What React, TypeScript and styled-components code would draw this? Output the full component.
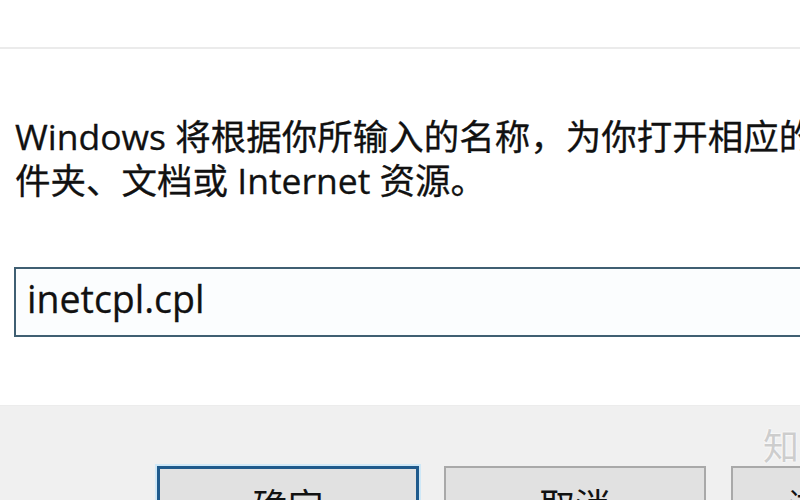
import styled, { createGlobalStyle } from "styled-components"

const GlobalStyle = createGlobalStyle`
  html, body {
    margin: 0;
    padding: 0;
    background: #ffffff;
  }
  body {
    width: 800px;
    height: 500px;
    overflow: hidden;
    font-family: "Open Sans", "Noto Sans CJK SC", sans-serif;
  }
`

const RunDialog = () => {
  return (
    <Window>
      <GlobalStyle />
      <Body>
        <TitleRule />
        <Prompt>
          <PromptLine>Windows 将根据你所输入的名称，为你打开相应的程序、文</PromptLine>
          <PromptLine>件夹、文档或 Internet 资源。</PromptLine>
        </Prompt>
        <CommandInput readOnly value="inetcpl.cpl" />
      </Body>
      <Footer>
        <DialogButton $primary>确定</DialogButton>
        <DialogButton>取消</DialogButton>
        <DialogButton>浏览(B)...</DialogButton>
        <Watermark>知乎</Watermark>
      </Footer>
    </Window>
  )
}

export default RunDialog

const Window = styled.div`
  width: 800px;
  height: 500px;
  display: flex;
  flex-direction: column;
  overflow: hidden;
  background: #ffffff;
`
const Body = styled.div`
  display: flex;
  flex-direction: column;
  height: 405px;
  flex-shrink: 0;
  background: #ffffff;
`
const TitleRule = styled.div`
  height: 47px;
  border-bottom: 2px solid #ebebeb;
`
const Prompt = styled.div`
  margin-top: 65px;
  padding-left: 15px;
  color: #111111;
  font-size: 35.5px;
  -webkit-text-stroke: 0.3px #111111;
`
const PromptLine = styled.div`
  white-space: nowrap;
  line-height: 44px;
`
const CommandInput = styled.input`
  margin: 65px 0 0 14px;
  width: 830px;
  height: 70px;
  box-sizing: border-box;
  border: 2px solid #3f5f72;
  background: #fbfdfe;
  padding: 0 0 8px 11px;
  font-family: "Open Sans", "Noto Sans CJK SC", sans-serif;
  font-size: 37.5px;
  color: #111111;
  -webkit-text-stroke: 0.3px #111111;
  outline: none;
`
const Footer = styled.div`
  position: relative;
  flex: 1;
  display: flex;
  align-items: flex-start;
  gap: 25px;
  padding: 60px 0 0 157px;
  background: #f0f0f0;
  border-top: 1px solid #ececec;
`
const DialogButton = styled.button<{ $primary?: boolean }>`
  flex-shrink: 0;
  width: 262px;
  height: 70px;
  box-sizing: border-box;
  background: #e1e1e1;
  border: ${p => (p.$primary ? "3px solid #1f5a8c" : "2px solid #a9a9a9")};
  box-shadow: ${p => (p.$primary ? "0 0 0 2px #cfe8f7" : "none")};
  font-family: "Noto Sans CJK SC", sans-serif;
  font-size: 35.5px;
  line-height: 1;
  color: #111111;
  padding: 6px 0 0;
`
const Watermark = styled.div`
  position: absolute;
  left: 763px;
  top: 12px;
  font-family: "Noto Sans CJK SC", sans-serif;
  font-size: 36px;
  color: #cdcdcd;
  white-space: nowrap;
  text-shadow: 0 0 2px #ffffff, 0 0 2px #ffffff;
`
